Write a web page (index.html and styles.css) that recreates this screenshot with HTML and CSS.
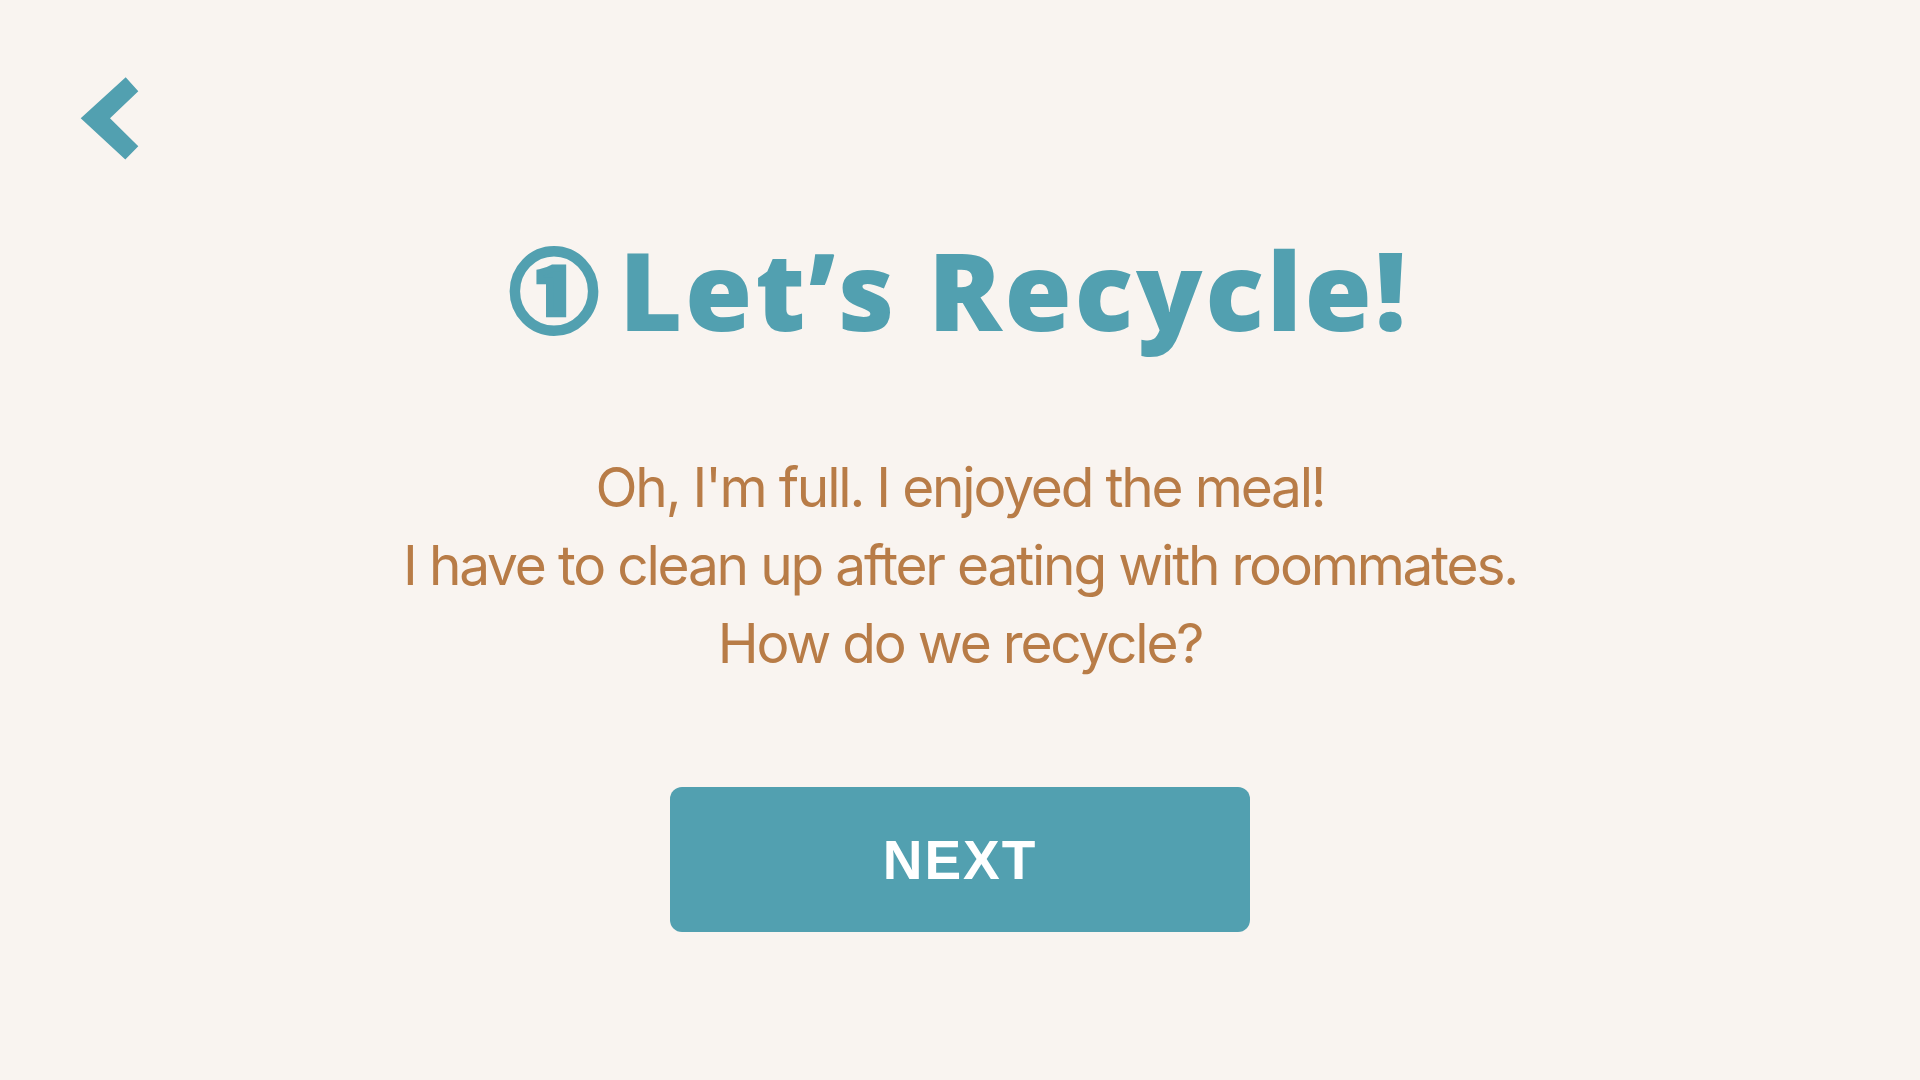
FILE: index.html
```html
<!DOCTYPE html>
<html lang="en">
<head>
<meta charset="utf-8">
<title>Let's Recycle</title>
<link rel="stylesheet" href="styles.css">
</head>
<body>
<div class="page">
  <header class="topbar">
    <button class="back" aria-label="Back">
      <svg width="58" height="83" viewBox="0 0 58 83">
        <polygon points="45.7,0.3 58.3,14.3 30,41.3 58.3,69.3 45.3,82.5 0.7,41.3" fill="#52a0b0"/>
      </svg>
    </button>
  </header>
  <main class="content">
    <h1 class="title"><span class="num">①</span><span class="words">Let’s Recycle!</span></h1>
    <p class="story">Oh, I'm full. I enjoyed the meal!<br>I have to clean up after eating with roommates.<br>How do we recycle?</p>
    <button class="next">NEXT</button>
  </main>
</div>
</body>
</html>
```

FILE: styles.css
```css
html, body {
  margin: 0;
  padding: 0;
  background: #f9f4f0;
}
.page {
  width: 1920px;
  height: 1080px;
  display: flex;
  flex-direction: column;
}
.topbar {
  padding: 77px 0 0 80px;
  height: 83px;
  display: flex;
}
.back {
  border: 0;
  padding: 0;
  background: none;
  width: 58px;
  height: 83px;
  cursor: pointer;
  display: block;
}
.back svg { display: block; overflow: visible; }
.content {
  display: flex;
  flex-direction: column;
  align-items: center;
}
.title {
  margin: 74px 0 0;
  font-family: "Open Sans", "Noto Sans", sans-serif;
  font-weight: 800;
  font-size: 109px;
  line-height: 1;
  color: #52a0b0;
  display: flex;
  align-items: center;
  gap: 22px;
}
.num {
  font-family: "Noto Sans CJK JP", sans-serif;
  font-weight: 900;
  font-size: 86px;
  -webkit-text-stroke: 7px #52a0b0;
  margin-top: -4px;
}
.words {
  letter-spacing: 2.7px;
}
.story {
  margin: 105px 0 0;
  font-family: "Inter", "Noto Sans", sans-serif;
  font-weight: 400;
  font-size: 55px;
  line-height: 78px;
  color: #b87c47;
  text-align: center;
  letter-spacing: -2.2px;
}
.next {
  margin-top: 105px;
  width: 580px;
  height: 145px;
  border: 0;
  border-radius: 12px;
  background: #52a0b0;
  color: #ffffff;
  font-family: "Liberation Sans", Arial, sans-serif;
  font-weight: 700;
  font-size: 55px;
  letter-spacing: 2px;
  cursor: pointer;
}
```
